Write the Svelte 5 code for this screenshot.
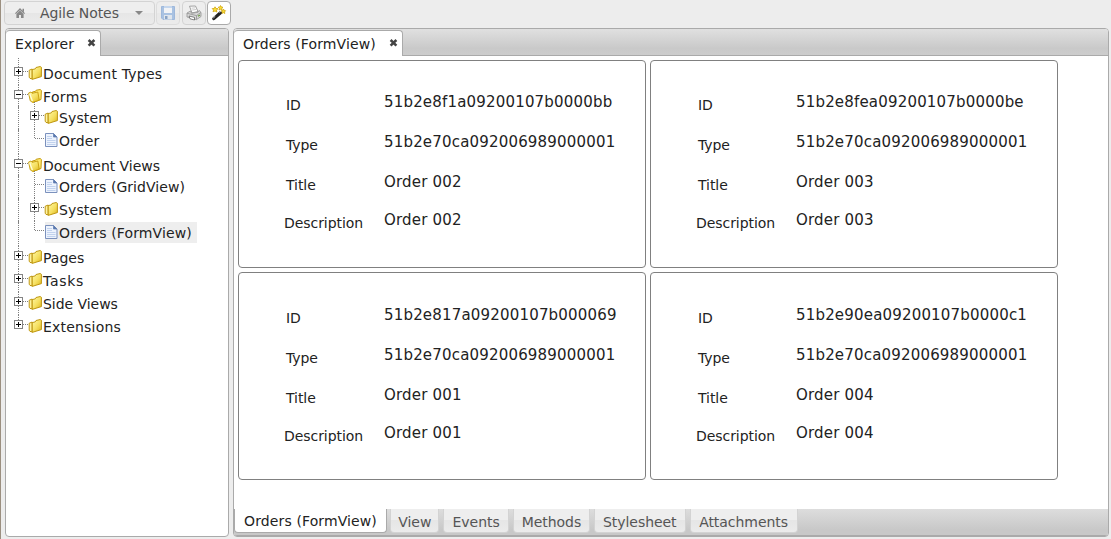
<script>
  const tree = [
    { d: 0, box: '+', icon: 'folder', t: 'Document Types', ls: 0.2 },
    { d: 0, box: '-', icon: 'open', t: 'Forms', ls: 0.35 },
    { d: 1, box: '+', icon: 'folder', t: 'System', first: true, ls: 0.12 },
    { d: 1, box: '', icon: 'doc', t: 'Order', last: true, ls: 0.1 },
    { d: 0, box: '-', icon: 'open', t: 'Document Views', ls: -0.04 },
    { d: 1, box: '', icon: 'doc', t: 'Orders (GridView)', first: true, ls: 0.05 },
    { d: 1, box: '+', icon: 'folder', t: 'System', ls: 0.12 },
    { d: 1, box: '', icon: 'doc', t: 'Orders (FormView)', last: true, sel: true, ls: 0.11 },
    { d: 0, box: '+', icon: 'folder', t: 'Pages', ls: 0 },
    { d: 0, box: '+', icon: 'folder', t: 'Tasks', ls: 0.7 },
    { d: 0, box: '+', icon: 'folder', t: 'Side Views', ls: -0.04 },
    { d: 0, box: '+', icon: 'folder', t: 'Extensions', last: true, ls: 0.2 }
  ];
  const cards = [
    ['51b2e8f1a09200107b0000bb', 'Order 002'],
    ['51b2e8fea09200107b0000be', 'Order 003'],
    ['51b2e817a09200107b000069', 'Order 001'],
    ['51b2e90ea09200107b0000c1', 'Order 004']
  ];
  const tabs = [['View', 49], ['Events', 66], ['Methods', 77], ['Stylesheet', 92], ['Attachments', 108]];
</script>

{#snippet close()}
  <svg class="close" width="9" height="8" viewBox="0 0 9 8"><path d="M1.6 1 7.4 6.6M7.4 1 1.6 6.6" stroke="#444" stroke-width="2.5" /></svg>
{/snippet}

<div class="app">
  <div class="toolbar">
    <button class="menu">
      <svg width="10" height="10" viewBox="0 0 10 10"><path d="M5 0 10 5.2 9.2 6 5 1.9.8 6 0 5.2ZM7.5.8H9V4L7.5 2.5ZM1.4 6 5 2.6 8.6 6V10H6V7H4v3H1.4Z" fill="#888" /></svg>
      <span>Agile Notes</span>
      <svg width="8" height="4" viewBox="0 0 8 4"><path d="M0 0H8L4 4Z" fill="#888" /></svg>
    </button>
    <button class="tool dim">
      <svg width="16" height="16" viewBox="0 0 16 16"><path d="M1.5 1.5h13v13H3L1.5 13Z" fill="#7da7dc" stroke="#6a96d0" /><path d="M4 1h8v7H4z" fill="#f4f8fd" /><path d="M4 1h8v2H4z" fill="#a9c8ee" /><path d="M4 10h8v4.5H4z" fill="#d9e3ed" /><path d="M5 11h2.5v3H5z" fill="#4772ad" /></svg>
    </button>
    <button class="tool">
      <svg width="16" height="16" viewBox="0 0 16 16"><path d="M3.5 1.2 9.5 1 12 6.5 6 8Z" fill="#fff" stroke="#8c8c8c" stroke-width=".8" /><path d="M5.5 3.2 9.3 2.8M6.2 5 10.2 4.5" stroke="#bbb" stroke-width=".8" /><path d="M1 8 4.5 6 5.5 8.3 12 7.3 13 5.4 15 7.3V11.5L10.5 14.6 1 12Z" fill="#d8d8d8" stroke="#888" stroke-width=".7" /><path d="M1.2 8.3 10.5 10.6 14.8 7.5M10.5 10.6V14.3" fill="none" stroke="#888" stroke-width=".7" /><path d="M3 11 8.5 12.4V15L4 13.8Z" fill="#fff" stroke="#555" stroke-width=".7" /><path d="M12 11.2 14 9.9" stroke="#6a9b42" stroke-width="1.2" /></svg>
    </button>
    <button class="tool active">
      <svg width="16" height="16" viewBox="0 0 16 16"><path d="M2.8 13.6 9.5 7.8" stroke="#222" stroke-width="3.2" stroke-linecap="round" /><path d="M2.3 13 4.3 11.2M8.5 7.5 10 6.2" stroke="#ccc" stroke-width="1" /><path d="M4 1.8 5 3.5 7 3.7 5.5 5 5.8 7 4 6 2 6.8 2.6 5 1.2 3.6 3.2 3.5ZM9.5.5 10.4 2 12 2.3 10.8 3.4 11 5 9.5 4.3 8 5 8.3 3.4 7.2 2.2 8.8 2ZM12.5 4 13.2 5.5 14.6 5.7 13.5 6.9 13.8 8.5 12.5 7.7 11 8.4 11.3 6.8 10.2 5.7 11.8 5.5Z" fill="#fbdf35" stroke="#d0a50c" stroke-width=".8" /></svg>
    </button>
  </div>

  <div class="body">
    <section class="panel left">
      <header><div class="tab ex"><span>Explorer</span>{@render close()}</div></header>
      <ul>
        {#each tree as n}
          <li class:first={n.first} class:endgroup={n.d === 1 && n.last}>
            {#if n.d === 1}
              <svg class="gut" width="16" height="23"><path d="M5.5 0V25" class="dot" /></svg>
            {/if}
            <svg class="gut" width="16" height="23">
              <path d={`M5.5 ${n.first || n.t === 'Document Types' ? -4 : 0}V${n.last ? 10 : 23}`} class="dot" />
              <path d="M6 9.5H15" class="dot" />
              {#if n.box}
                <rect x="1.5" y="5.5" width="8" height="8" fill="#fff" stroke="#848484" />
                <path d={n.box === '+' ? 'M3 9.5H8M5.5 7V12' : 'M3 9.5H8'} stroke="#000" />
              {/if}
            </svg>
            <span class="node" class:sel={n.sel}>
              {#if n.icon === 'doc'}
                <svg width="14" height="16" viewBox="0 0 14 16"><path d="M1.5 1.5H9.5L13 5V14.5H1.5Z" fill="#edf3fd" stroke="#7b91bd" /><path d="M9.5 1.5V5H13Z" fill="#5877ad" stroke="#6682b4" stroke-width=".8" /><path d="M3 4.5H8M3 6.5H8M3 8.5H11.5M3 10.5H11.5M3 12.5H11.5" stroke="#c1d2ee" /></svg>
              {:else}
                <svg class="fold" width="14" height="16" viewBox="0 0 14 16">
                  <defs><linearGradient id="gold" x1="0" y1="0" x2="1" y2="1"><stop offset="0" stop-color="#fff9a8" /><stop offset=".55" stop-color="#f5df60" /><stop offset="1" stop-color="#dcb41a" /></linearGradient></defs>
                  {#if n.icon === 'open'}
                    <path d="M4.5 13 4.3 4 7.5 3.3 8.2 2.2 12.2 1.5 13.4 2.5 13 11.5 5 14.4Z" fill="#ffe96e" stroke="#bd9100" stroke-width=".9" />
                    <path d="M.6 5 3 4 4.2 5.3 9.8 4 11.3 12.2 4.6 14.4 2.2 12.8Z" fill="url(#gold)" stroke="#c59b0c" stroke-width=".9" />
                    <path d="M1.7 5.7 4.4 13" stroke="#fffde0" stroke-width="1.2" />
                  {:else}
                    <path d="M1.2 5.2 4.2 4V13.9L2 13.4 1.2 12.2Z" fill="#fff3a0" stroke="#b88d00" stroke-width=".9" />
                    <path d="M4.2 4.6 7.2 3.9 8 2.5 12.2 1.5 13.4 2.3V11.6L4.2 14.4Z" fill="url(#gold)" stroke="#b88d00" stroke-width=".9" />
                  {/if}
                </svg>
              {/if}
              <span class="label" style:letter-spacing="{n.ls}px">{n.t}</span>
            </span>
          </li>
        {/each}
      </ul>
    </section>

    <section class="panel right">
      <header><div class="tab of"><span>Orders (FormView)</span>{@render close()}</div></header>
      <div class="cards">
        {#each cards as c}
          <article>
            <div class="field f1"><span>ID</span><b>{c[0]}</b></div>
            <div class="field f2"><span>Type</span><b>51b2e70ca092006989000001</b></div>
            <div class="field f3"><span>Title</span><b>{c[1]}</b></div>
            <div class="field f4"><span>Description</span><b>{c[1]}</b></div>
          </article>
        {/each}
      </div>
      <footer>
        <div class="btab on">Orders (FormView)</div>
        {#each tabs as t}<div class="btab" style:width="{t[1]}px">{t[0]}</div>{/each}
      </footer>
    </section>
  </div>
</div>

<style>
  :global(body) { background: #ededed; }
  .app { box-sizing: border-box; width: 1111px; height: 539px; border-left: 1px solid #9b8f80; background: #ededed; font: 14px/18px Verdana, "DejaVu Sans", sans-serif; color: #222; overflow: hidden; display: flex; flex-direction: column; }
  .toolbar { display: flex; height: 28px; padding: 1px 0 0 3px; gap: 1px; box-sizing: border-box; }
  button { box-sizing: border-box; height: 24px; padding: 0; border: 1px solid #d3d3d3; border-radius: 4px; background: linear-gradient(#eee 50%, #e6e6e6 50%, #ebebeb); font: inherit; color: #555; display: flex; align-items: center; }
  .menu { width: 151px; padding-left: 10px; }
  .menu span { width: 80px; margin: 0 15px 0 15px; letter-spacing: -.08px; text-align: left; white-space: nowrap; }
  .tool { width: 24px; justify-content: center; margin-left: 1px; }
  .tool.dim { opacity: .6; margin-left: 0; }
  .tool.active { background: #fff; border-color: #aaa; margin-left: 0; }
  .body { display: flex; flex: 1; gap: 4px; padding: 0 2px 1px 4px; }
  .panel { box-sizing: border-box; border: 1px solid #aaa; border-radius: 4px; background: #fff; overflow: hidden; display: flex; flex-direction: column; height: 509px; }
  .left { width: 224px; }
  .right { flex: 1; }
  header { box-sizing: border-box; height: 27px; flex: none; background: linear-gradient(#e0e0e0, #c9c9c9 75%, #cdcdcd); border-bottom: 1px solid #aaa; display: flex; padding-top: 1px; }
  .tab { box-sizing: border-box; height: 26px; background: #fff; border: 1px solid #aaa; border-width: 1px 1px 0 0; border-radius: 4px 4px 0 0; display: flex; align-items: flex-start; padding: 4px 0 0 9px; white-space: nowrap; }
  .ex { width: 95px; }
  .of { width: 169px; }
  .ex span { width: 72px; letter-spacing: .1px; }
  .of span { width: 146px; letter-spacing: .11px; }
  .close { margin-top: 4px; }
  ul { list-style: none; margin: 0; padding: 6px 0 0 7px; }
  li { height: 23px; display: flex; }
  li.first { margin-top: -2px; }
  li.endgroup { margin-bottom: 2px; }
  .gut { flex: none; overflow: visible; }
  .dot { stroke: #808080; stroke-dasharray: 1 1; fill: none; }
  .node { display: flex; align-items: center; height: 21px; margin-top: 1px; padding-right: 5px; white-space: nowrap; }
  .node svg { margin: -2px 1px 0 -1px; }
  .node.sel { background: #eee; }
  .cards { flex: 1; display: grid; grid-template-columns: 408px 408px; grid-template-rows: 208px 208px; gap: 4px; padding: 4px; }
  article { box-sizing: border-box; border: 1px solid #808080; border-radius: 4px; padding: 31px 0 0 45px; }
  .field { display: flex; height: 40px; }
  .f3 { height: 38px; }
  .field span { width: 98px; padding: 4px 0 0 2px; letter-spacing: -.06px; }
  .f4 span { width: 100px; padding-left: 0; }
  .field b { font-weight: 400; font-size: 15px; line-height: 20px; letter-spacing: .18px; white-space: nowrap; }
  article:nth-child(n + 3) { padding-top: 32px; }
  footer { box-sizing: border-box; height: 27px; flex: none; background: linear-gradient(#ddd, #c8c8c8 80%); border-bottom: 1px solid #aaa; display: flex; gap: 4px; }
  .btab { box-sizing: border-box; height: 24px; border: 1px solid #d3d3d3; border-top: 0; border-radius: 0 0 4px 4px; background: linear-gradient(#eee 50%, #e6e6e6 50%, #ebebeb); color: #555; text-align: center; padding-top: 4px; margin-left: -.2px; letter-spacing: -.05px; white-space: nowrap; }
  .btab.on { width: 153px; margin-left: 0; margin-right: -.5px; background: #fff; color: #222; padding-top: 3px; letter-spacing: .11px; border-color: #aaa; border-width: 0 1px 1px 1px; }
</style>
